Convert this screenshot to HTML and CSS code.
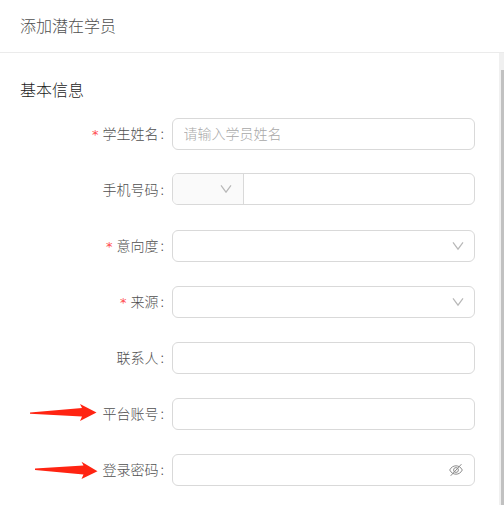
FILE: index.html
```html
<!DOCTYPE html>
<html lang="zh-CN">
<head>
    <meta charset="UTF-8">
    <meta name="viewport" content="width=device-width, initial-scale=1.0">
    <title>添加潜在学员</title>
    <link rel="stylesheet" href="styles.css">
</head>
<body>

<header class="drawer-header">添加潜在学员</header>

<main class="drawer-body">
    <form class="student-form">
        <h2 class="section-title">基本信息</h2>

        <div class="form-item">
            <label class="label required" for="name">学生姓名</label>
            <input class="control" type="text" id="name" placeholder="请输入学员姓名">
        </div>

        <div class="form-item phone-item">
            <label class="label" for="phone">手机号码</label>
            <div class="control phone">
                <div class="area-code">
                    <svg class="arrow-down" viewBox="0 0 12 12"><path d="M1 2.3 L6 9.2 L11 2.3"/></svg>
                </div>
                <input class="phone-input" type="text" id="phone">
            </div>
        </div>

        <div class="form-item">
            <label class="label required">意向度</label>
            <div class="control select">
                <svg class="arrow-down" viewBox="0 0 12 12"><path d="M1 2.3 L6 9.2 L11 2.3"/></svg>
            </div>
        </div>

        <div class="form-item">
            <label class="label required">来源</label>
            <div class="control select">
                <svg class="arrow-down" viewBox="0 0 12 12"><path d="M1 2.3 L6 9.2 L11 2.3"/></svg>
            </div>
        </div>

        <div class="form-item">
            <label class="label" for="contact">联系人</label>
            <input class="control" type="text" id="contact">
        </div>

        <div class="form-item">
            <label class="label" for="account">平台账号</label>
            <input class="control" type="text" id="account">
            <svg class="pointer pointer-account" viewBox="0 0 68 20"><path d="M0 9.5 L52 5 L50 1 L66.5 9.5 L50 18 L52 13.6 L0 10.8 Z"/></svg>
        </div>

        <div class="form-item">
            <label class="label" for="password">登录密码</label>
            <div class="control password">
                <input class="password-input" type="password" id="password">
                <svg class="eye" viewBox="0 0 14 14">
                    <path d="M0.7 7 C3.4 1.4 10.6 1.4 13.3 7 C10.6 12.6 3.4 12.6 0.7 7 Z"/>
                    <circle cx="7" cy="7" r="2.4"/>
                    <path d="M1.7 12.8 L12.4 1.2"/>
                </svg>
            </div>
            <svg class="pointer pointer-password" viewBox="0 0 64 20"><path d="M0 7.6 L48.5 4.6 L46.5 0.7 L62.5 10.2 L46.5 18 L48.5 13.6 L0 8.9 Z"/></svg>
        </div>
    </form>

    <div class="scrollbar"><div class="thumb"></div></div>
</main>

</body>
</html>
```

FILE: styles.css
```css
* {
    box-sizing: border-box;
}

body {
    display: flex;
    flex-direction: column;
    height: 100vh;
    margin: 0;
    overflow: hidden;
    background-color: #fff;
    color: #505050;
    font-family: "Noto Sans CJK SC", sans-serif;
    font-weight: 300;
    font-size: 14px;
}

.drawer-header {
    flex: none;
    height: 53px;
    padding: 0 20px;
    border-bottom: 1px solid #ebebeb;
    font-size: 16px;
    line-height: 50px;
}

.drawer-body {
    display: flex;
    flex: 1;
    min-height: 0;
}

.student-form {
    flex: 1;
    padding: 24px 24px 0 20px;
}

.section-title {
    margin: 0 0 17px;
    color: #1a1a1a;
    font-size: 16px;
    font-weight: 300;
    line-height: 24px;
}

.form-item {
    position: relative;
    display: flex;
    height: 32px;
    margin-bottom: 24px;
}

.phone-item {
    margin-top: -1px;
    margin-bottom: 25px;
}

.label {
    width: 152px;
    padding-right: 8px;
    line-height: 31px;
    text-align: right;
    white-space: nowrap;
}

.phone-item .label {
    line-height: 33px;
}

.label::after {
    content: ":";
    margin-left: 2px;
}

.required::before {
    content: "*";
    margin-right: 4px;
    color: #ff4d4f;
    font-family: "DejaVu Sans", sans-serif;
    font-weight: 400;
    font-size: 13px;
}

.control {
    display: flex;
    flex: 1;
    align-items: center;
    min-width: 0;
    padding: 0 10px 0 11px;
    border: 1px solid #d9d9d9;
    border-radius: 6px;
    background-color: #fff;
    font: inherit;
}

input.control {
    padding: 0 11px 2px 10.5px;
}

.control::placeholder {
    color: #a8a8a8;
}

.select {
    justify-content: flex-end;
}

.phone {
    align-items: stretch;
    padding: 0;
    overflow: hidden;
}

.password {
    padding-right: 11px;
}

.area-code {
    display: flex;
    align-items: center;
    justify-content: flex-end;
    width: 71px;
    padding-right: 11px;
    border-right: 1px solid #d9d9d9;
    background-color: #fafafa;
}

.phone-input,
.password-input {
    flex: 1;
    min-width: 0;
    padding: 0;
    border: none;
    background: none;
}

.arrow-down {
    width: 12px;
    height: 12px;
    fill: none;
    stroke: #b8b8b8;
    stroke-width: 1.2;
}

.eye {
    width: 14px;
    height: 14px;
    fill: none;
    stroke: #8c8c8c;
    stroke-width: 1;
}

/* red arrows laid over the form */
.pointer {
    position: absolute;
    fill: #ff2412;
}

.pointer-account {
    top: 5px;
    left: 10px;
    width: 68px;
    height: 20px;
}

.pointer-password {
    top: 7px;
    left: 15px;
    width: 64px;
    height: 20px;
}

.scrollbar {
    width: 5px;
    padding: 17px 0 0 2px;
    background-color: #f0f0f0;
}

.thumb {
    height: 100%;
    background-color: #c1c1c1;
}
```
